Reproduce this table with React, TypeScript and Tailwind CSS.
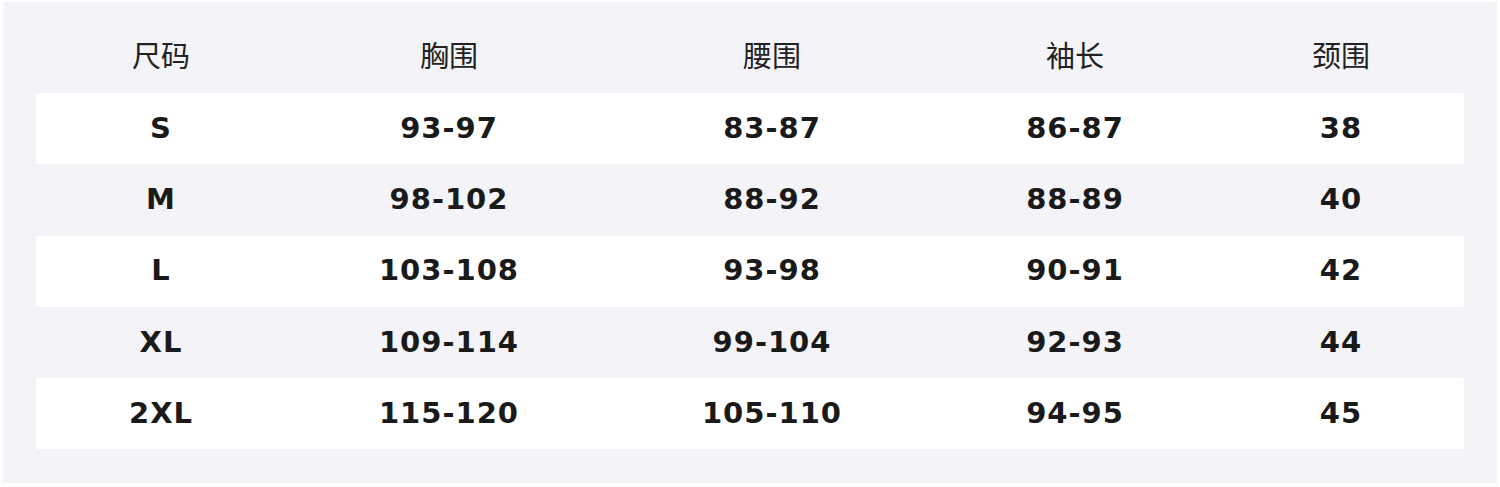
// Size chart table: header row + alternating white/gray rows on a light panel.
const headers = ["尺码", "胸围", "腰围", "袖长", "颈围"];

const rows = [
  ["S", "93-97", "83-87", "86-87", "38"],
  ["M", "98-102", "88-92", "88-89", "40"],
  ["L", "103-108", "93-98", "90-91", "42"],
  ["XL", "109-114", "99-104", "92-93", "44"],
  ["2XL", "115-120", "105-110", "94-95", "45"],
];

const cols = "grid grid-cols-[250px_326px_320px_286px_1fr]";

export default function App() {
  return (
    <div className="w-[1500px] h-[487px] bg-white pt-[2px] pl-[3px]">
      <div className="w-[1494px] h-[481px] bg-[#f3f3f8] pt-[19px] px-[33px]">
        <div className={`${cols} h-[72px] pb-[4px] items-center text-[29px] text-[#222] font-['Noto_Sans_CJK_SC',sans-serif]`}>
          {headers.map((h) => (
            <div key={h} className="text-center">
              {h}
            </div>
          ))}
        </div>
        {rows.map((r, i) => (
          <div
            key={r[0]}
            className={`${cols} h-[71.25px] items-center text-[29px] tracking-[1px] font-bold text-[#1a1a1a] font-['DejaVu_Sans',sans-serif] ${
              i % 2 === 0 ? "bg-white" : "bg-transparent"
            }`}
          >
            {r.map((c, j) => (
              <div key={j} className="text-center">
                {c}
              </div>
            ))}
          </div>
        ))}
      </div>
    </div>
  );
}
